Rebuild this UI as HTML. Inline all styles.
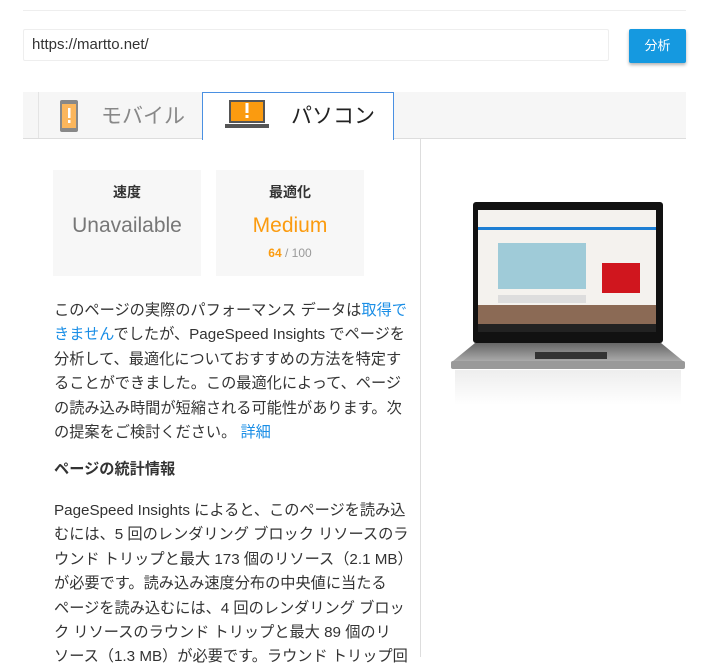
<!DOCTYPE html>
<html><head><meta charset="utf-8"><style>
body{margin:0;background:#fff;width:710px;height:657px;overflow:hidden;font-family:"Liberation Sans","Noto Sans CJK JP",sans-serif;position:relative}
.a{position:absolute}
.card{position:absolute;top:170px;width:148px;height:106px;background:#f7f7f7;text-align:center}
.card h4{margin:12px 0 0;font-size:14px;font-weight:bold;color:#333}
.card .v{font-size:21px;margin-top:12px}
.txt{position:absolute;left:54px;width:366px;font-size:15.2px;line-height:24.4px;color:#333;white-space:nowrap;overflow:hidden}
a{color:#1a8ee6;text-decoration:none}
</style></head><body>
<div class="a" style="left:23px;top:10px;width:663px;height:1px;background:#eee"></div>
<div class="a" style="left:23px;top:29px;border:1px solid #eee;border-radius:2px;font-size:15px;color:#333;line-height:30px;padding-left:8px;box-sizing:border-box;width:586px;height:32px">https://martto.net/</div>
<div class="a" style="left:629px;top:29px;width:57px;height:34px;background:#1599e0;color:#fff;font-size:13px;text-align:center;line-height:34px;border-radius:2px;box-shadow:0 2px 3px rgba(0,0,0,.3)">分析</div>
<div class="a" style="left:23px;top:92px;width:663px;height:46px;background:#f6f6f6;border-bottom:1px solid #ddd"></div>
<div class="a" style="left:38px;top:92px;width:1px;height:46px;background:#e4e4e4"></div>
<svg class="a" style="left:59px;top:99px" width="20" height="34"><rect x="1" y="1" width="18" height="32" rx="2" fill="#888"/><rect x="3" y="5" width="14" height="24" fill="#fbb65c"/><rect x="9" y="9" width="2.5" height="10" fill="#fff"/><rect x="9" y="21" width="2.5" height="3" fill="#fff"/></svg>
<div class="a" style="left:101px;top:100px;font-size:21px;color:#888">モバイル</div>
<div class="a" style="left:202px;top:92px;width:190px;height:47px;background:#fff;border:1px solid #4a90e2;border-bottom:none"></div>
<svg class="a" style="left:225px;top:99px" width="44" height="32"><rect x="4" y="1" width="36" height="23" fill="#555"/><rect x="6" y="3" width="32" height="19" fill="#fb9b0f"/><rect x="20.5" y="4" width="3" height="10" fill="#fff"/><rect x="20.5" y="16" width="3" height="3" fill="#fff"/><rect x="0" y="25" width="44" height="4" fill="#555"/></svg>
<div class="a" style="left:291px;top:100px;font-size:21px;color:#222">パソコン</div>
<div class="a" style="left:420px;top:139px;width:1px;height:518px;background:#ddd"></div>
<div class="card" style="left:53px"><h4>速度</h4><div class="v" style="color:#777">Unavailable</div></div>
<div class="card" style="left:216px"><h4>最適化</h4><div class="v" style="color:#fb9b0f">Medium</div><div style="font-size:12px;color:#999;margin-top:8px"><b style="color:#fb9b0f">64</b> / 100</div></div>
<div class="txt" style="top:299px">このページの実際のパフォーマンス データは<a>取得で</a><br><a>きません</a>でしたが、PageSpeed Insights でページを<br>分析して、最適化についておすすめの方法を特定す<br>ることができました。この最適化によって、ページ<br>の読み込み時間が短縮される可能性があります。次<br>の提案をご検討ください。 <a>詳細</a></div>
<div class="txt" style="top:458px;font-weight:bold">ページの統計情報</div>
<div class="txt" style="top:499px">PageSpeed Insights によると、このページを読み込<br>むには、5 回のレンダリング ブロック リソースのラ<br>ウンド トリップと最大 173 個のリソース（2.1 MB）<br>が必要です。読み込み速度分布の中央値に当たる<br>ページを読み込むには、4 回のレンダリング ブロッ<br>ク リソースのラウンド トリップと最大 89 個のリ<br>ソース（1.3 MB）が必要です。ラウンド トリップ回</div>
<svg class="a" style="left:445px;top:195px" width="245" height="215">
<defs><linearGradient id="g" x1="0" y1="0" x2="0" y2="1"><stop offset="0" stop-color="#ccc"/><stop offset="1" stop-color="#fff"/></linearGradient><linearGradient id="b" x1="0" y1="0" x2="0" y2="1"><stop offset="0" stop-color="#666"/><stop offset="1" stop-color="#aaa"/></linearGradient></defs>
<rect x="28" y="7" width="190" height="141" rx="3" fill="#111"/>
<rect x="33" y="15" width="178" height="122" fill="#f4f2ee"/>
<rect x="33" y="32" width="178" height="3" fill="#1e7fd4"/>
<rect x="53" y="48" width="88" height="46" fill="#9fcbd8"/>
<rect x="53" y="100" width="88" height="8" fill="#ddd"/>
<rect x="157" y="68" width="38" height="30" fill="#d0161e"/>
<rect x="33" y="110" width="178" height="19" fill="#8b6a55"/>
<rect x="33" y="129" width="178" height="8" fill="#222"/>
<path d="M30 148 L216 148 L238 166 L8 166 Z" fill="url(#b)"/>
<rect x="6" y="166" width="234" height="8" rx="2" fill="#999"/>
<rect x="90" y="157" width="72" height="7" fill="#333"/>
<rect x="10" y="175" width="226" height="35" fill="url(#g)" opacity=".35"/>
</svg>
</body></html>
